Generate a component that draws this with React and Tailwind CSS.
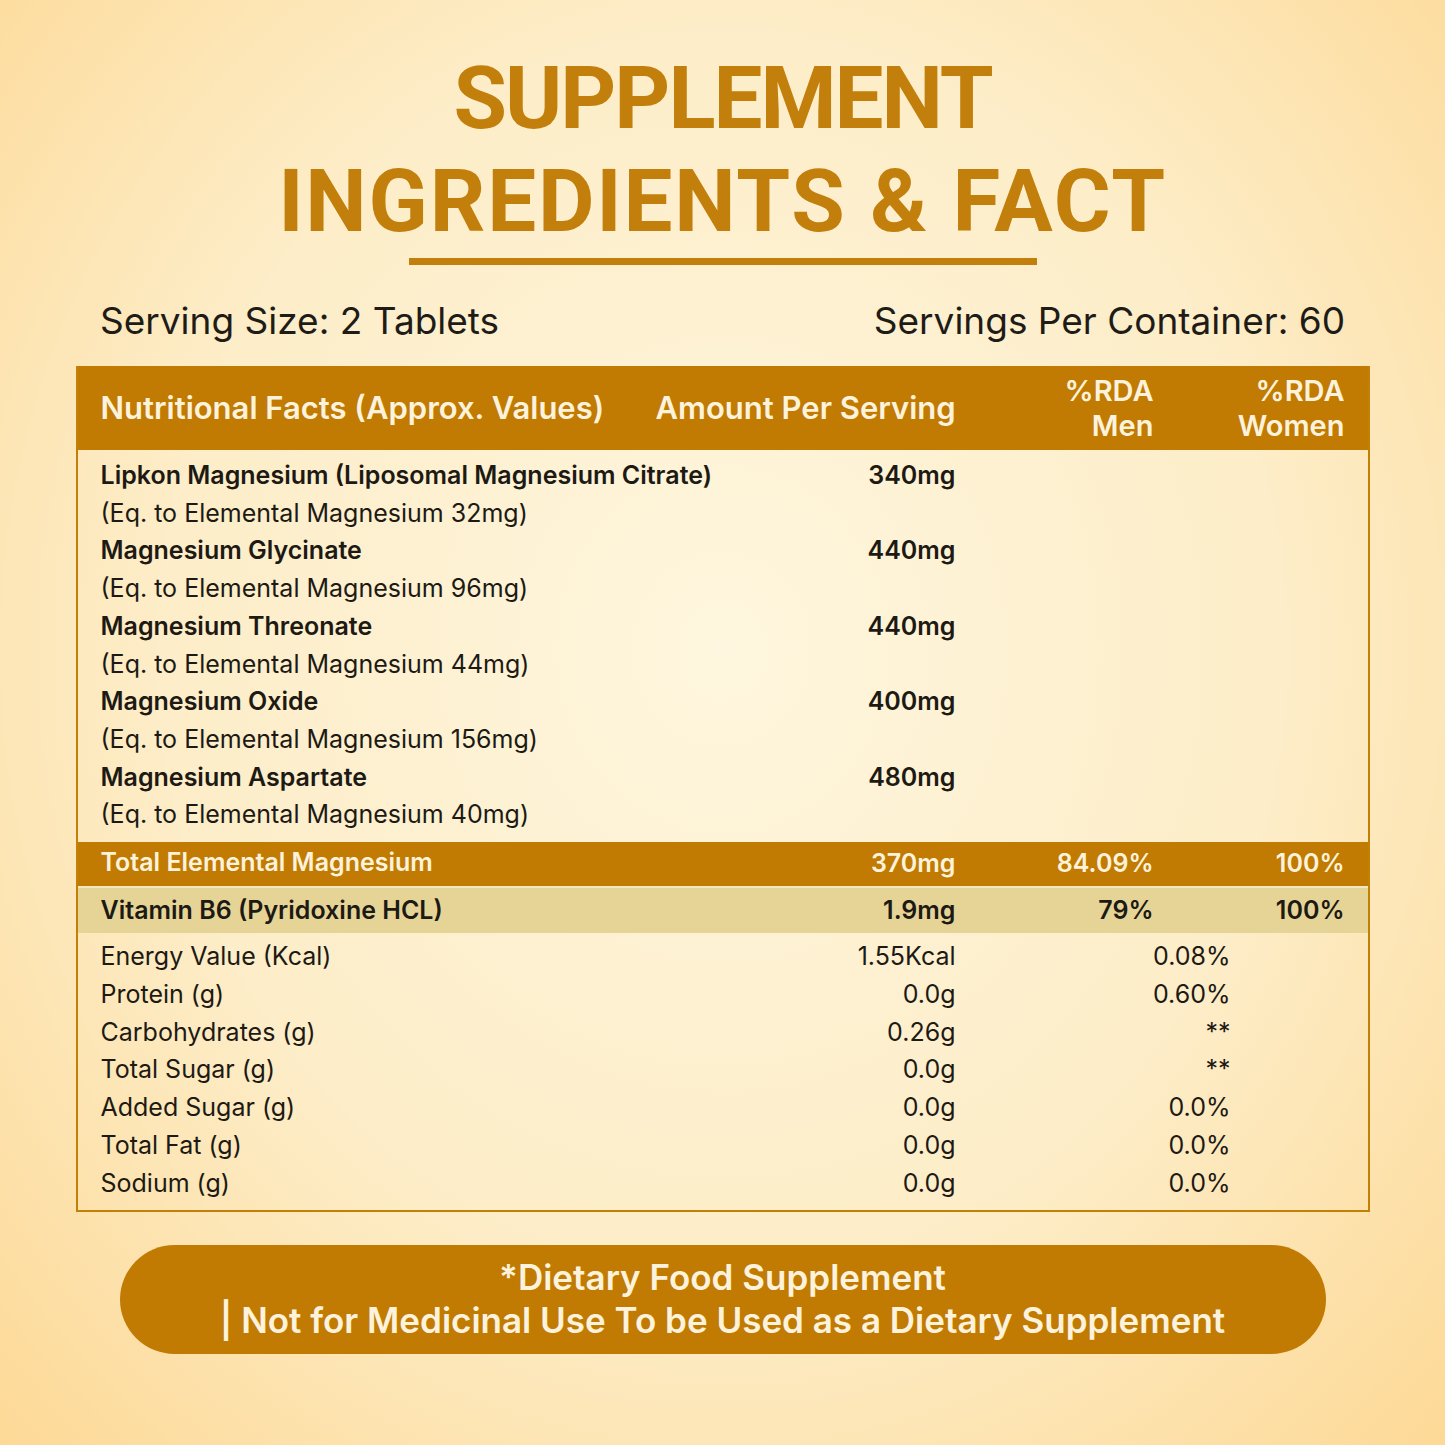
import React from "react";

const ingredients = [
  ["Lipkon Magnesium (Liposomal Magnesium Citrate)", "(Eq. to Elemental Magnesium 32mg)", "340mg"],
  ["Magnesium Glycinate", "(Eq. to Elemental Magnesium 96mg)", "440mg"],
  ["Magnesium Threonate", "(Eq. to Elemental Magnesium 44mg)", "440mg"],
  ["Magnesium Oxide", "(Eq. to Elemental Magnesium 156mg)", "400mg"],
  ["Magnesium Aspartate", "(Eq. to Elemental Magnesium 40mg)", "480mg"],
];

const nutrition = [
  ["Energy Value (Kcal)", "1.55Kcal", "0.08%"],
  ["Protein (g)", "0.0g", "0.60%"],
  ["Carbohydrates (g)", "0.26g", "**"],
  ["Total Sugar (g)", "0.0g", "**"],
  ["Added Sugar (g)", "0.0g", "0.0%"],
  ["Total Fat (g)", "0.0g", "0.0%"],
  ["Sodium (g)", "0.0g", "0.0%"],
];

const grid = "grid grid-cols-[minmax(0,1fr)_300px_198px_191px] px-[23px]";

export default function App() {
  return (
    <div
      className="w-[1445px] h-[1445px] overflow-hidden flex flex-col items-center bg-[radial-gradient(ellipse_at_50%_45%,#fef6de_0%,#fdedc8_55%,#fdd996_100%)] text-[#1d1a14]"
      style={{ fontFamily: "Inter, 'Noto Sans', sans-serif" }}
    >
      <h1
        className="pt-[47px] text-center font-bold text-[87px] leading-[103px] text-[#c27f0b]"
        style={{ fontFamily: "Roboto, 'Liberation Sans', sans-serif" }}
      >
        <div className="tracking-[-2px]">SUPPLEMENT</div>
        <div className="tracking-[1.8px]">INGREDIENTS &amp; FACT</div>
      </h1>
      <div className="mt-[5px] w-[628px] h-[7px] bg-[#c27f0b]" />

      <div className="mt-[34px] w-[1293px] flex justify-between px-[24px] text-[37px] leading-[44px] text-[#1f1c17]">
        <span>Serving Size: 2 Tablets</span>
        <span>Servings Per Container: 60</span>
      </div>

      <div className="mt-[23px] w-[1294px] border-2 border-[#c38006] border-t-0">
        {/* header */}
        <div className={`${grid} h-[84px] bg-[#c17b03] text-[#fdf3dc] font-semibold items-center`}>
          <div className="text-[31px] whitespace-nowrap">Nutritional Facts (Approx. Values)</div>
          <div className="text-[31px] text-right whitespace-nowrap">Amount Per Serving</div>
          <div className="text-[29px] leading-[35px] text-right">%RDA<br />Men</div>
          <div className="text-[29px] leading-[35px] text-right">%RDA<br />Women</div>
        </div>

        {/* ingredients */}
        <div className="pt-[7px] pb-[8px] text-[25px] leading-[37.7px]">
          {ingredients.map(([name, sub, amt]) => (
            <div key={name} className={grid}>
              <div className="whitespace-nowrap">
                <div className="font-semibold">{name}</div>
                <div>{sub}</div>
              </div>
              <div className="text-right font-semibold">{amt}</div>
              <div />
              <div />
            </div>
          ))}
        </div>

        {/* total */}
        <div className={`${grid} h-[44px] items-center bg-[#c17b03] text-[#fdf3dc] font-semibold text-[25px]`}>
          <div className="-mt-[3px]">Total Elemental Magnesium</div>
          <div className="text-right">370mg</div>
          <div className="text-right">84.09%</div>
          <div className="text-right">100%</div>
        </div>
        <div className="h-[2px] bg-[#f4e6bd]" />
        <div className={`${grid} h-[45px] items-center bg-[#e6d497] font-semibold text-[25px]`}>
          <div>Vitamin B6 (Pyridoxine HCL)</div>
          <div className="text-right">1.9mg</div>
          <div className="text-right">79%</div>
          <div className="text-right">100%</div>
        </div>

        {/* nutrition */}
        <div className="pt-[5px] pb-[7px] text-[25px] leading-[37.8px]">
          {nutrition.map(([name, amt, rda]) => (
            <div key={name} className="grid grid-cols-[minmax(0,1fr)_300px_275px_114px] px-[23px]">
              <div>{name}</div>
              <div className="text-right">{amt}</div>
              <div className="text-right">{rda}</div>
              <div />
            </div>
          ))}
        </div>
      </div>

      <div className="mt-[33px] w-[1206px] h-[109px] rounded-full bg-[#c17b03] flex flex-col items-center justify-center text-[#fdf3dc] font-semibold text-[35px] leading-[43px]">
        <div>*Dietary Food Supplement</div>
        <div>| Not for Medicinal Use To be Used as a Dietary Supplement</div>
      </div>
    </div>
  );
}
